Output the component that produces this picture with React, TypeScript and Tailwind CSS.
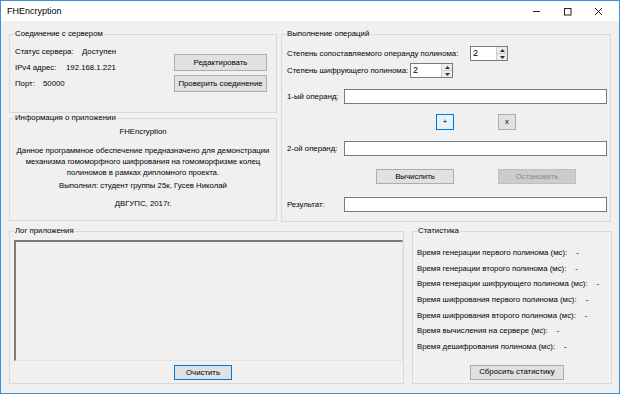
import type { ReactNode } from "react";

const GroupBox = ({
  title,
  className,
  children,
}: {
  title: string;
  className?: string;
  children?: ReactNode;
}) => (
  <fieldset className={`border border-[#d9d9d9] min-w-0 ${className ?? ""}`}>
    <legend className="ml-[4px] px-[1px] leading-[10px]">{title}</legend>
    {children}
  </fieldset>
);

const Button = ({
  children,
  className,
}: {
  children: ReactNode;
  className?: string;
}) => (
  <button
    className={`flex items-center justify-center border leading-none whitespace-nowrap ${className ?? ""}`}
  >
    {children}
  </button>
);

const TextBox = ({ className }: { className?: string }) => (
  <input
    readOnly
    className={`h-[15px] bg-white border border-[#7a7a7a] outline-none ${className ?? ""}`}
  />
);

const Spinner = ({ className }: { className?: string }) => (
  <div className={`flex h-[15px] border border-[#7a7a7a] bg-white ${className ?? ""}`}>
    <span className="flex-1 pl-[2px] leading-[13px] text-[9px]">2</span>
    <div className="flex flex-col w-[11px] border-l border-[#cfcfcf]">
      <div className="flex-1 flex items-center justify-center bg-[#ececec] border-b border-[#cfcfcf]">
        <svg width="5" height="3" viewBox="0 0 5 3">
          <path d="M0 3 L2.5 0 L5 3 Z" fill="#303030" />
        </svg>
      </div>
      <div className="flex-1 flex items-center justify-center bg-[#ececec]">
        <svg width="5" height="3" viewBox="0 0 5 3">
          <path d="M0 0 L2.5 3 L5 0 Z" fill="#303030" />
        </svg>
      </div>
    </div>
  </div>
);

const stats = [
  "Время генерации первого полинома (мс):",
  "Время генерации второго полинома (мс):",
  "Время генерации шифрующего полинома (мс):",
  "Время шифрования первого полинома (мс):",
  "Время шифрования второго полинома (мс):",
  "Время вычисления на сервере (мс):",
  "Время дешифрования полинома (мс):",
];

export default function App() {
  return (
    <div className="w-[620px] h-[394px] flex flex-col border border-[#3d8fd8] bg-[#f0f0f0] text-black text-[7.8px] font-['Liberation_Sans',Arial,sans-serif] whitespace-nowrap overflow-hidden">
      {/* Title bar */}
      <div className="h-[20px] bg-white flex items-center shrink-0">
        <span className="ml-[6px] text-[9px] leading-none">FHEncryption</span>
        <div className="ml-auto flex items-center">
          <div className="w-[31px] flex justify-center">
            <svg width="9" height="9" viewBox="0 0 9 9">
              <line x1="1" y1="4.5" x2="8" y2="4.5" stroke="#222" strokeWidth="1" />
            </svg>
          </div>
          <div className="w-[31px] flex justify-center">
            <svg width="9" height="9" viewBox="0 0 9 9">
              <rect x="1.5" y="1.5" width="6.5" height="6.5" fill="none" stroke="#222" strokeWidth="1" />
            </svg>
          </div>
          <div className="w-[31px] flex justify-center mr-[5px]">
            <svg width="9" height="9" viewBox="0 0 9 9">
              <path d="M1 1 L8 8 M8 1 L1 8" stroke="#222" strokeWidth="1" />
            </svg>
          </div>
        </div>
      </div>

      {/* Top row */}
      <div className="flex gap-[4px] pl-[8px] pt-[8px]">
        <div className="flex flex-col w-[268px]">
          <GroupBox title="Соединение с сервером" className="h-[84px]">
            <div className="flex">
              <div className="flex flex-col pl-[5px] pt-[5px] leading-[16px]">
                <div className="flex">
                  <span className="w-[67px]">Статус сервера:</span>
                  <span>Доступен</span>
                </div>
                <div className="flex">
                  <span className="w-[51px]">IPv4 адрес:</span>
                  <span>192.168.1.221</span>
                </div>
                <div className="flex">
                  <span className="w-[28px]">Порт:</span>
                  <span>50000</span>
                </div>
              </div>
              <div className="ml-auto mr-[9px] mt-[15px] flex flex-col gap-[4px]">
                <Button className="w-[93px] h-[17px] bg-[#e1e1e1] border-[#adadad]">
                  Редактировать
                </Button>
                <Button className="w-[93px] h-[17px] bg-[#e1e1e1] border-[#adadad]">
                  Проверить соединение
                </Button>
              </div>
            </div>
          </GroupBox>
          <GroupBox title="Информация о приложении" className="h-[108px]">
            <div className="flex flex-col items-center text-center leading-[11px] pt-[3px]">
              <div>FHEncryption</div>
              <div className="mt-[8px]">
                Данное программное обеспечение предназначено для демонстрации
                <br />
                механизма гомоморфного шифрования на гомоморфизме колец
                <br />
                полиномов в рамках дипломного проекта.
              </div>
              <div className="mt-[2px]">Выполнил: студент группы 25к, Гусев Николай</div>
              <div className="mt-[7px]">ДВГУПС, 2017г.</div>
            </div>
          </GroupBox>
        </div>

        <GroupBox title="Выполнение операций" className="w-[330px] h-[193px]">
          <div className="flex flex-col pl-[5px]">
            <div className="flex items-center h-[15px] mt-[7px]">
              <span className="w-[183px]">Степень сопоставляемого операнду полинома:</span>
              <Spinner className="w-[38px]" />
            </div>
            <div className="flex items-center h-[15px] mt-[2px]">
              <span className="w-[123px]">Степень шифрующего полинома:</span>
              <Spinner className="w-[43px]" />
            </div>
            <div className="flex items-center h-[15px] mt-[11px]">
              <span className="w-[57px]">1-ый операнд:</span>
              <TextBox className="w-[263px]" />
            </div>
            <div className="flex items-center h-[16px] mt-[10px] pl-[149px] gap-[44px]">
              <Button className="w-[18px] h-[16px] bg-[#e5f1fb] border-[#0078d7]">+</Button>
              <Button className="w-[18px] h-[16px] bg-[#e1e1e1] border-[#adadad]">x</Button>
            </div>
            <div className="flex items-center h-[15px] mt-[11px]">
              <span className="w-[57px]">2-ой операнд:</span>
              <TextBox className="w-[263px]" />
            </div>
            <div className="flex items-center h-[15px] mt-[13px] pl-[89px] gap-[44px]">
              <Button className="w-[78px] h-[15px] bg-[#e1e1e1] border-[#adadad]">Вычислить</Button>
              <Button className="w-[78px] h-[15px] bg-[#cccccc] border-[#bfbfbf] text-[#8a8a8a]">
                Остановить
              </Button>
            </div>
            <div className="flex items-center h-[15px] mt-[13px]">
              <span className="w-[57px]">Результат:</span>
              <TextBox className="w-[263px]" />
            </div>
          </div>
        </GroupBox>
      </div>

      {/* Bottom row */}
      <div className="flex gap-[8px] pl-[8px] mt-[4px]">
        <GroupBox title="Лог приложения" className="w-[395px] h-[158px]">
          <div className="flex flex-col pl-[4px] pt-[4px]">
            <div className="w-[389px] h-[121px] bg-[#f0f0f0] border-t-2 border-l-2 border-r border-b border-t-[#7a7a7a] border-l-[#7a7a7a] border-r-[#e3e3e3] border-b-[#e3e3e3]" />
            <Button className="ml-[160px] mt-[4px] w-[58px] h-[15px] bg-[#e1e1e1] border-[#0078d7]">
              Очистить
            </Button>
          </div>
        </GroupBox>
        <GroupBox title="Статистика" className="w-[200px] h-[158px]">
          <div className="flex flex-col pl-[4px] pt-[9px] leading-[15.67px]">
            {stats.map((s) => (
              <div key={s} className="flex">
                <span>{s}</span>
                <span className="ml-[9px]">-</span>
              </div>
            ))}
            <Button className="ml-[53px] mt-[10px] w-[94px] h-[15px] bg-[#e1e1e1] border-[#adadad]">
              Сбросить статистику
            </Button>
          </div>
        </GroupBox>
      </div>
    </div>
  );
}
